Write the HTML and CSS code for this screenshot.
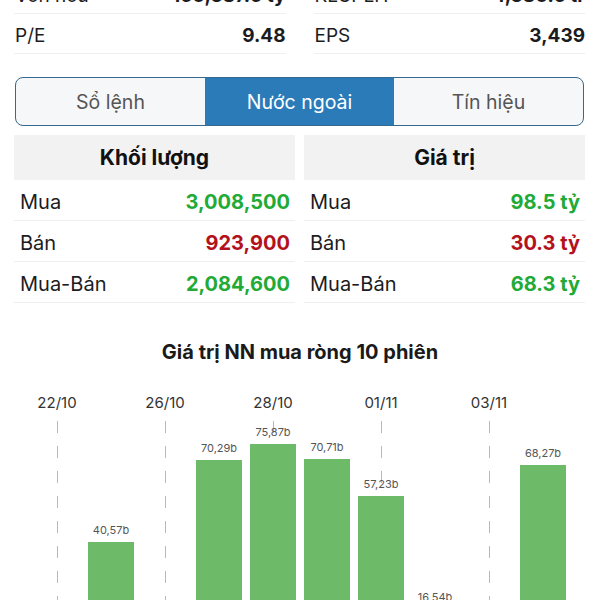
FILE: index.html
```html
<!DOCTYPE html>
<html lang="vi">
<head>
	<meta charset="UTF-8" />
	<title>Nước ngoài</title>
	<link rel="stylesheet" href="styles.css">
</head>
<body>
	<div class="page">
		<div class="stats">
			<div class="stat"><span>Vốn hóa</span><b>150,387.5 tỷ</b></div>
			<div class="stat"><span>KLCPLH</span><b>4,380.5 tr</b></div>
			<div class="stat"><span>P/E</span><b>9.48</b></div>
			<div class="stat"><span>EPS</span><b>3,439</b></div>
		</div>

		<div class="tabs">
			<div class="tab">Sổ lệnh</div>
			<div class="tab active">Nước ngoài</div>
			<div class="tab">Tín hiệu</div>
		</div>

		<div class="tables">
			<div class="table">
				<div class="head">Khối lượng</div>
				<div class="row"><span>Mua</span><b class="up">3,008,500</b></div>
				<div class="row"><span>Bán</span><b class="down">923,900</b></div>
				<div class="row"><span>Mua-Bán</span><b class="up">2,084,600</b></div>
			</div>
			<div class="table">
				<div class="head">Giá trị</div>
				<div class="row"><span>Mua</span><b class="up">98.5 tỷ</b></div>
				<div class="row"><span>Bán</span><b class="down">30.3 tỷ</b></div>
				<div class="row"><span>Mua-Bán</span><b class="up">68.3 tỷ</b></div>
			</div>
		</div>

		<h3 class="chartTitle">Giá trị NN mua ròng 10 phiên</h3>

		<!-- 1b = 2.776px, cột âm nằm dưới khung nhìn -->
		<div class="chart">
			<div class="slot tick"><div class="date">22/10</div><div class="plot"></div></div>
			<div class="slot"><div class="date"></div><div class="plot"><span class="num">40,57b</span><div class="bar" style="height:113px"></div></div></div>
			<div class="slot tick"><div class="date">26/10</div><div class="plot"></div></div>
			<div class="slot"><div class="date"></div><div class="plot"><span class="num">70,29b</span><div class="bar" style="height:195px"></div></div></div>
			<div class="slot tick"><div class="date">28/10</div><div class="plot"><span class="num">75,87b</span><div class="bar" style="height:211px"></div></div></div>
			<div class="slot"><div class="date"></div><div class="plot"><span class="num">70,71b</span><div class="bar" style="height:196px"></div></div></div>
			<div class="slot tick"><div class="date">01/11</div><div class="plot"><span class="num">57,23b</span><div class="bar" style="height:159px"></div></div></div>
			<div class="slot"><div class="date"></div><div class="plot"><span class="num">16,54b</span><div class="bar" style="height:46px"></div></div></div>
			<div class="slot tick"><div class="date">03/11</div><div class="plot"></div></div>
			<div class="slot"><div class="date"></div><div class="plot"><span class="num">68,27b</span><div class="bar" style="height:190px"></div></div></div>
		</div>
	</div>
</body>
</html>
```

FILE: styles.css
```css
* {
	box-sizing: border-box;
}
html,body {
	margin: 0;
	padding: 0;
	overflow: hidden;
	background: #fff;
}
body {
	font-family: Inter, "Noto Sans", sans-serif;
	color: #1c1c1e;
}
.page {
	margin-top: -26px;
}

/* chỉ số cơ bản */
.stats {
	display: grid;
	grid-template-columns: 1fr 1fr;
	column-gap: 28px;
	padding: 0 15px 0 14px;
}
.stat {
	height: 40px;
	display: flex;
	justify-content: space-between;
	align-items: center;
	border-bottom: 1px solid #efefef;
	font-size: 19px;
	padding: 3px 0 0 1px;
}
.stat b {
	font-weight: 700;
}

/* tab */
.tabs {
	display: flex;
	margin: 23px 16px 0 15px;
	height: 49px;
	border: 1.5px solid #35698f;
	border-radius: 8px;
	overflow: hidden;
	background: #f6f7f8;
}
.tab {
	flex: 1;
	display: flex;
	align-items: center;
	justify-content: center;
	font-size: 19.5px;
	color: #555;
}
.tab.active {
	background: #2b7bb9;
	color: #fff;
}

/* bảng */
.tables {
	display: grid;
	grid-template-columns: 1fr 1fr;
	column-gap: 9px;
	margin-top: 9px;
	padding: 0 15px 0 14px;
}
.head {
	height: 45px;
	background: #f2f2f2;
	display: flex;
	align-items: center;
	justify-content: center;
	font-size: 21px;
	font-weight: 700;
	color: #111;
}
.row {
	height: 41px;
	display: flex;
	justify-content: space-between;
	align-items: center;
	padding: 4px 5px 0 6px;
	border-bottom: 1px solid #efefef;
	font-size: 20px;
}
.row b {
	font-weight: 700;
}
.up {
	color: #22aa37;
}
.down {
	color: #b3121c;
}

/* biểu đồ */
.chartTitle {
	margin: 37px 0 0;
	height: 24px;
	line-height: 24px;
	text-align: center;
	font-size: 20px;
	font-weight: 700;
	color: #1a1a1a;
}
.chart {
	display: flex;
	gap: 8px;
	margin-top: 30px;
	padding-left: 34px;
	height: 261px;
}
.slot {
	width: 46px;
	display: flex;
	flex-direction: column;
}
.date {
	height: 22px;
	line-height: 18px;
	text-align: center;
	font-size: 15px;
	color: #333;
	white-space: nowrap;
}
.plot {
	flex: 1;
	display: flex;
	flex-direction: column;
	justify-content: flex-end;
	align-items: center;
}
.tick .plot {
	background-image: linear-gradient(to bottom, #b9b9b9 0 12px, transparent 12px 25px);
	background-size: 1px 25px;
	background-repeat: repeat-y;
	background-position: center 5px;
}
.num {
	font-size: 11px;
	line-height: 13px;
	color: #555;
	margin-bottom: 5px;
	white-space: nowrap;
}
.bar {
	width: 46px;
	background: #6dbb69;
}
```
